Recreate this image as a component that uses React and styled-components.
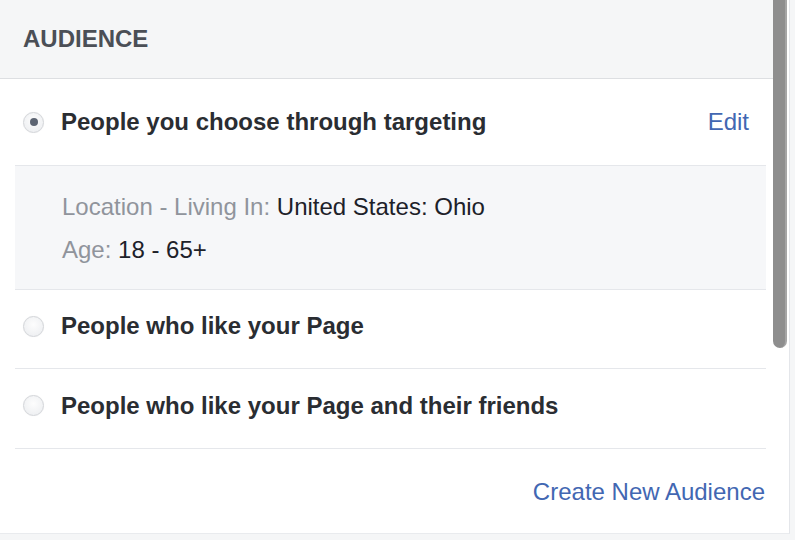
import React from "react";
import styled, { createGlobalStyle } from "styled-components";

const GlobalStyle = createGlobalStyle`
  html, body {
    margin: 0;
    padding: 0;
    background: #f5f6f7;
    font-family: "Liberation Sans", Arial, sans-serif;
  }
`;

const Frame = styled.div`
  width: 795px;
  height: 540px;
  background: #f5f6f7;
  overflow: hidden;
`;

const Panel = styled.div`
  display: flex;
  width: 789px;
  height: 533px;
  background: #fff;
  border-right: 1px solid #e4e6ea;
  border-bottom: 1px solid #e9ebee;
`;

const Content = styled.div`
  flex: 1;
  display: flex;
  flex-direction: column;
`;

const Header = styled.div`
  flex-shrink: 0;
  height: 78px;
  display: flex;
  align-items: center;
  padding-left: 23px;
  background: #f5f6f7;
  border-bottom: 1px solid #dddfe2;
  color: #4b4f56;
  font-size: 24px;
  font-weight: 600;
`;

const Body = styled.div`
  padding: 0 7px 0 15px;
`;

const Row = styled.div`
  display: flex;
  align-items: center;
  box-sizing: border-box;
  height: ${(p) => p.h}px;
  padding: 0 17px ${(p) => p.lift || 0}px 8px;
  border-bottom: 1px solid #e5e7eb;
`;

const Radio = styled.span`
  box-sizing: border-box;
  width: 21px;
  height: 21px;
  border-radius: 50%;
  border: 1px solid #d3d5d9;
  background: radial-gradient(circle at 50% 40%, #fdfdfd, #eaecef);
  box-shadow: 0 0 1px rgba(0, 0, 0, 0.08);
  display: flex;
  align-items: center;
  justify-content: center;
  margin-right: 17px;
  flex-shrink: 0;

  &::after {
    content: "";
    width: 8px;
    height: 8px;
    border-radius: 50%;
    background: #5d6573;
    display: ${(p) => (p.checked ? "block" : "none")};
  }
`;

const Label = styled.span`
  flex: 1;
  color: #2a2d32;
  font-size: 24px;
  font-weight: 600;
`;

const Link = styled.a`
  color: #4267b2;
  font-size: 24px;
  text-decoration: none;
  cursor: pointer;
`;

const Details = styled.div`
  background: #f6f7f9;
  border-bottom: 1px solid #e5e7eb;
  height: 124px;
  box-sizing: border-box;
  padding: 27px 0 0 47px;
  display: flex;
  flex-direction: column;
  gap: 15px;
`;

const DetailLine = styled.div`
  font-size: 24px;
  line-height: 28px;
  color: #1d2129;
`;

const Muted = styled.span`
  color: #90949c;
`;

const Footer = styled.div`
  display: flex;
  justify-content: flex-end;
  align-items: center;
  padding: 2px 1px 0 0;
  height: 82px;
`;

const Track = styled.div`
  width: 16px;
  display: flex;
  flex-direction: column;
`;

const Thumb = styled.div`
  width: 14px;
  height: 348px;
  background: #8e8e8e;
  border-radius: 0 0 7px 7px;
  border-right: 2px solid #a5a5a5;
  box-sizing: border-box;
`;

export default function App() {
  return (
    <>
      <GlobalStyle />
      <Frame>
        <Panel>
          <Content>
            <Header>AUDIENCE</Header>
            <Body>
              <Row h={87}>
                <Radio checked />
                <Label>People you choose through targeting</Label>
                <Link>Edit</Link>
              </Row>
              <Details>
                <DetailLine>
                  <Muted>Location - Living In:</Muted> United States: Ohio
                </DetailLine>
                <DetailLine>
                  <Muted>Age:</Muted> 18 - 65+
                </DetailLine>
              </Details>
              <Row h={79} lift={6}>
                <Radio />
                <Label>People who like your Page</Label>
              </Row>
              <Row h={80} lift={6}>
                <Radio />
                <Label>People who like your Page and their friends</Label>
              </Row>
              <Footer>
                <Link>Create New Audience</Link>
              </Footer>
            </Body>
          </Content>
          <Track>
            <Thumb />
          </Track>
        </Panel>
      </Frame>
    </>
  );
}
